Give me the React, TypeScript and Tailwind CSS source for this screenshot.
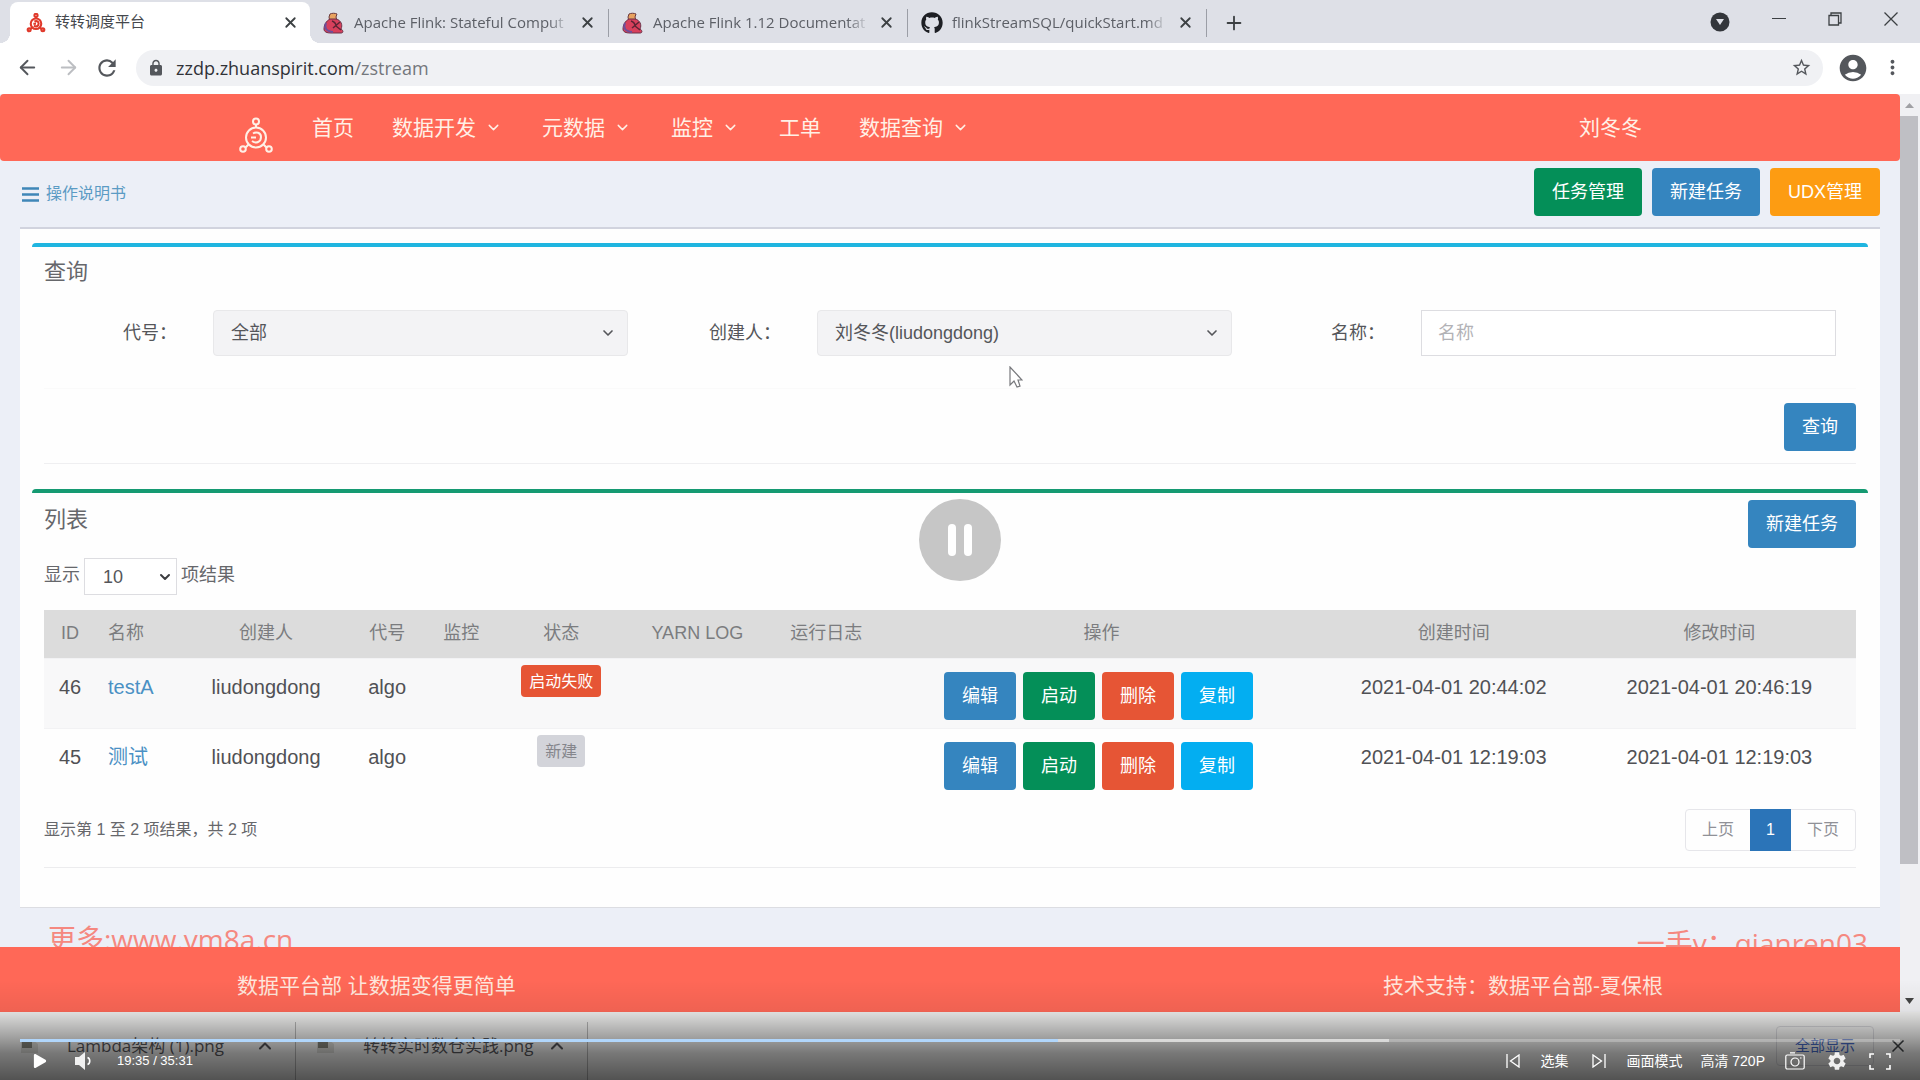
import React from 'react';
import { ArrowLeft, ArrowRight, ChevronDown, ChevronUp, Plus, X } from 'lucide-react';
import { FaGithub, FaPlay } from 'react-icons/fa';
import { MdAccountCircle, MdLock, MdMoreVert, MdRefresh, MdSettings, MdStarBorder } from 'react-icons/md';

interface Task {
  id: number;
  name: string;
  owner: string;
  code: string;
  status: string;
  failed: boolean;
  createdAt: string;
  updatedAt: string;
}

const tasks: Task[] = [
  {
    id: 46,
    name: 'testA',
    owner: 'liudongdong',
    code: 'algo',
    status: '启动失败',
    failed: true,
    createdAt: '2021-04-01 20:44:02',
    updatedAt: '2021-04-01 20:46:19',
  },
  {
    id: 45,
    name: '测试',
    owner: 'liudongdong',
    code: 'algo',
    status: '新建',
    failed: false,
    createdAt: '2021-04-01 12:19:03',
    updatedAt: '2021-04-01 12:19:03',
  },
];

const columns = [
  { title: 'ID', width: 'w-[52px]' },
  { title: '名称', width: 'w-[82px]' },
  { title: '创建人', width: 'w-[176px]' },
  { title: '代号', width: 'w-[66px]' },
  { title: '监控', width: 'w-[82px]' },
  { title: '状态', width: 'w-[118px]' },
  { title: 'YARN LOG', width: 'w-[154px]' },
  { title: '运行日志', width: 'w-[104px]' },
  { title: '操作', width: 'w-[446px]' },
  { title: '创建时间', width: 'w-[258px]' },
  { title: '修改时间', width: 'w-[273px]' },
];

const navItems = [
  { label: '首页', menu: false },
  { label: '数据开发', menu: true },
  { label: '元数据', menu: true },
  { label: '监控', menu: true },
  { label: '工单', menu: false },
  { label: '数据查询', menu: true },
];

const tones = {
  blue: 'bg-[#3585bf]',
  green: 'bg-[#048f58]',
  orange: 'bg-[#fd9c12]',
  red: 'bg-[#e65535]',
  cyan: 'bg-[#03aef1]',
};

function Button({ tone, children }: { tone: keyof typeof tones; children: React.ReactNode }) {
  return (
    <button type="button" className={`h-12 shrink-0 rounded px-[18px] text-lg text-white ${tones[tone]}`}>
      {children}
    </button>
  );
}

function BrandLogo({ className, strokeWidth }: { className: string; strokeWidth: number }) {
  return (
    <svg viewBox="0 0 34 38" fill="none" stroke="currentColor" strokeWidth={strokeWidth} className={className}>
      <circle cx="17" cy="4.500" r="3" />
      <path d="M17 7.500v3.500M10 27l-4 4M24 27l4 4" />
      <circle cx="17" cy="20.500" r="10" />
      <path d="M14 16.500c3-2 8-1 8 3.500 0 5-5 7-9 4M12 20.500h5" />
      <circle cx="4" cy="32" r="2.800" />
      <circle cx="30" cy="32" r="2.800" />
    </svg>
  );
}

function FlinkLogo() {
  return (
    <svg viewBox="0 0 22 22" className="size-[22px] shrink-0">
      <path d="M7 2c2-1 5-1 7 0l-1 3 1 4-7 1-1-5z" fill="#e8a25f" stroke="#6b3a3c" />
      <path d="M7 7C3 9 1 13 1 17c0 3 3 4 7 4h10c3 0 2-3 0-4 2-4 0-9-5-10z" fill="#d8405c" stroke="#6b3048" />
      <path d="M3 11c-2 5 0 8 7 9" stroke="#6d4f9a" strokeWidth="2" fill="none" />
      <path d="M9 9c3 1 4 3 4 5l5 4M17 10l-7 6" stroke="#5d2434" strokeWidth="1.500" fill="none" />
    </svg>
  );
}

function Tab({ icon, title }: { icon: React.ReactNode; title: string }) {
  return (
    <div className="flex h-[38px] w-[298px] items-center gap-[9px] pr-3 pl-[13px]">
      {icon}
      <span className="flex-1 overflow-hidden font-['Open_Sans',sans-serif] text-[15px] whitespace-nowrap text-[#5c5f66] [mask-image:linear-gradient(to_right,black_90%,transparent)]">
        {title}
      </span>
      <button type="button" aria-label="关闭标签页">
        <X className="size-[17px] text-[#3c4043]" strokeWidth={2.5} />
      </button>
    </div>
  );
}

function TabStrip() {
  return (
    <div className="flex h-[43px] items-center bg-[#dee0e7] pt-0.5">
      <div className="relative ml-2.5 flex h-full w-[300px] items-center rounded-t-lg bg-white pr-[11px] pl-4">
        <span className="absolute bottom-0 -left-2.5 size-2.5 bg-[radial-gradient(circle_at_top_left,transparent_70%,white_72%)]" />
        <span className="absolute -right-2.5 bottom-0 size-2.5 bg-[radial-gradient(circle_at_top_right,transparent_70%,white_72%)]" />
        <BrandLogo className="size-5 shrink-0 text-[#e0392b]" strokeWidth={4} />
        <span className="ml-[9px] flex-1 text-[15px] text-[#45484d]">转转调度平台</span>
        <button type="button" aria-label="关闭标签页">
          <X className="size-[17px] text-[#3c4043]" strokeWidth={2.5} />
        </button>
      </div>
      <Tab icon={<FlinkLogo />} title="Apache Flink: Stateful Comput" />
      <span className="h-7 w-px bg-[#9b9ea6]" />
      <Tab icon={<FlinkLogo />} title="Apache Flink 1.12 Documentat" />
      <span className="h-7 w-px bg-[#9b9ea6]" />
      <Tab icon={<FaGithub className="size-[22px] shrink-0 text-[#1d1f24]" />} title="flinkStreamSQL/quickStart.md" />
      <span className="h-7 w-px bg-[#9b9ea6]" />
      <button type="button" aria-label="新标签页" className="ml-4">
        <Plus className="size-[22px] text-[#3c4043]" />
      </button>
      <div className="ml-auto flex items-center gap-[42px] pr-[22px] pb-2 text-[#3c4043]">
        <svg viewBox="0 0 20 20" className="mt-1.5 size-5">
          <circle cx="10" cy="10" r="9.500" fill="#33363b" />
          <path d="M6 7h8l-4 6z" fill="#dee0e7" />
        </svg>
        <svg viewBox="0 0 14 14" className="size-3.5" stroke="currentColor" fill="none">
          <path d="M0 6.500h14" />
        </svg>
        <svg viewBox="0 0 14 14" className="size-3.5" stroke="currentColor" strokeWidth="1.300" fill="none">
          <path d="M1 3.500h9.500V13H1zM3 3V1h10v10h-2" />
        </svg>
        <svg viewBox="0 0 14 14" className="size-3.5" stroke="currentColor" strokeWidth="1.300" fill="none">
          <path d="M.5.5l13 13M13.500.5l-13 13" />
        </svg>
      </div>
    </div>
  );
}

function AddressBar() {
  return (
    <div className="flex h-[51px] items-center bg-white pr-4 pb-0.5 pl-4 text-[#54575c]">
      <button type="button" aria-label="后退">
        <ArrowLeft className="size-[23px]" />
      </button>
      <button type="button" aria-label="前进" className="ml-[18px]">
        <ArrowRight className="size-[23px] text-[#bcbec2]" />
      </button>
      <button type="button" aria-label="刷新" className="ml-3.5">
        <MdRefresh className="size-[26px]" />
      </button>
      <div className="mr-3.5 ml-4 flex h-9 flex-1 items-center rounded-full bg-[#f0f1f4] px-[11px]">
        <MdLock className="size-[18px]" />
        <span className="ml-[11px] flex-1 font-['Open_Sans',sans-serif] text-lg leading-none text-[#303338]">
          zzdp.zhuanspirit.com<span className="text-[#74777c]">/zstream</span>
        </span>
        <MdStarBorder className="size-[21px]" />
      </div>
      <MdAccountCircle className="size-8" />
      <MdMoreVert className="ml-3 size-[23px]" />
    </div>
  );
}

function NavBar() {
  return (
    <nav className="flex h-[67px] items-center rounded bg-[#ff6857] pl-[239px] text-[21px] text-[#fff0e6]">
      <BrandLogo className="mt-4 h-[38px] w-[34px]" strokeWidth={2} />
      <ul className="ml-5 flex flex-1">
        {navItems.map((item) => (
          <li key={item.label}>
            <a href="#" className="flex items-center px-[19px]">
              {item.label}
              {item.menu && <ChevronDown className="mr-0.5 ml-[9px] size-[17px]" />}
            </a>
          </li>
        ))}
      </ul>
      <a href="#" className="mr-[258px]">
        刘冬冬
      </a>
    </nav>
  );
}

function Field({ id, label, children }: { id: string; label: string; children: React.ReactNode }) {
  return (
    <div className="flex items-center gap-9 pr-5">
      <label htmlFor={id} className="w-[133px] shrink-0 text-right">
        {label}
      </label>
      <div className="relative flex-1">{children}</div>
    </div>
  );
}

function FilterSelect({ id, value }: { id: string; value: string }) {
  return (
    <>
      <select
        id={id}
        className="h-[46px] w-full appearance-none rounded-sm border border-[#e8e8ea] bg-[#f3f3f5] px-[17px] text-[#55565a]"
      >
        <option>{value}</option>
      </select>
      <ChevronDown className="pointer-events-none absolute top-[15px] right-3 size-4 text-[#55565a]" strokeWidth={2.5} />
    </>
  );
}

function QueryPanel() {
  return (
    <section className="rounded-t border-t-4 border-[#1fb5e0] px-3 text-lg text-[#55565a]">
      <h2 className="h-12 text-[22px] leading-[50px] text-[#66676b]">查询</h2>
      <form>
        <div className="grid grid-cols-3 pt-[15px] pb-8">
          <Field id="code" label="代号：">
            <FilterSelect id="code" value="全部" />
          </Field>
          <Field id="owner" label="创建人：">
            <FilterSelect id="owner" value="刘冬冬(liudongdong)" />
          </Field>
          <Field id="name" label="名称：">
            <input
              id="name"
              type="text"
              placeholder="名称"
              className="block h-[46px] w-full border border-[#dddde1] bg-white px-4 placeholder:text-[#b2b2b6]"
            />
          </Field>
        </div>
        <div className="flex justify-end border-t border-b border-t-[#fafafa] border-b-[#efeff1] pt-3.5 pb-3">
          <Button tone="blue">查询</Button>
        </div>
      </form>
    </section>
  );
}

function TaskTable() {
  return (
    <table className="mt-[15px] w-full table-fixed text-center">
      <thead>
        <tr className="h-12 bg-[#dcdcdc] text-lg text-[#7b7c7f]">
          {columns.map((col) => (
            <th
              key={col.title}
              className={`pb-0.5 font-normal ${col.width} ${col.title === '名称' ? 'pl-3 text-left' : ''}`}
            >
              {col.title}
            </th>
          ))}
        </tr>
      </thead>
      <tbody>
        {tasks.map((task) => (
          <tr
            key={task.id}
            className="h-[70px] border-t border-[#f2f2f4] align-top text-xl leading-[30px] text-[#505155] odd:bg-[#f8f8f9]"
          >
            <td className="pt-[13px]">{task.id}</td>
            <td className="pt-[13px] pl-3 text-left">
              <a href="#" className="text-[#4a90c4]">
                {task.name}
              </a>
            </td>
            <td className="pt-[13px]">{task.owner}</td>
            <td className="pt-[13px]">{task.code}</td>
            <td />
            <td className="pt-1.5">
              <span
                className={`mx-auto block h-8 w-fit rounded px-2 text-base leading-[34px] ${
                  task.failed ? 'bg-[#e65535] text-white' : 'bg-[#d3d4da] text-[#85868c]'
                }`}
              >
                {task.status}
              </span>
            </td>
            <td />
            <td />
            <td className="pt-[13px] pr-1.5">
              <div className="flex justify-center gap-[7px]">
                <Button tone="blue">编辑</Button>
                <Button tone="green">启动</Button>
                <Button tone="red">删除</Button>
                <Button tone="cyan">复制</Button>
              </div>
            </td>
            <td className="pt-[13px]">{task.createdAt}</td>
            <td className="pt-[13px]">{task.updatedAt}</td>
          </tr>
        ))}
      </tbody>
    </table>
  );
}

function ListPanel() {
  return (
    <section className="mt-[25px] rounded-t border-t-4 border-[#159a72] px-3 text-lg text-[#66676b]">
      <div className="flex justify-between pt-[7px]">
        <h2 className="text-[22px] leading-10">列表</h2>
        <Button tone="blue">新建任务</Button>
      </div>
      <div className="mt-2.5 flex h-[37px] items-center">
        <label htmlFor="page-size" className="pb-1">
          显示
        </label>
        <div className="relative mx-1">
          <select
            id="page-size"
            className="block h-[37px] w-[93px] appearance-none border border-[#dddde1] bg-white pl-[18px] text-[#55565a]"
          >
            <option>10</option>
          </select>
          <ChevronDown
            className="pointer-events-none absolute top-[11px] right-1 size-4 text-[#3c3d40]"
            strokeWidth={3}
          />
        </div>
        <span className="pb-1">项结果</span>
      </div>
      <TaskTable />
      <div className="mt-[11px] flex h-[42px] items-center justify-between text-base">
        <p>显示第 1 至 2 项结果，共 2 项</p>
        <div className="flex h-[42px] rounded border border-[#e6e6ea] text-[#909197]">
          <button type="button" className="px-4">
            上页
          </button>
          <button type="button" className="-my-px w-[41px] bg-[#2b74b8] text-white">
            1
          </button>
          <button type="button" className="px-4">
            下页
          </button>
        </div>
      </div>
      <hr className="mt-4 border-[#ececee]" />
    </section>
  );
}

function ScrollBar() {
  return (
    <div className="flex w-5 shrink-0 flex-col items-center bg-[#f0f0f3] pr-0.5">
      <svg viewBox="0 0 18 22" className="h-[22px] w-[18px]">
        <path d="M5 14h9l-4.500-5z" fill="#a0a0a4" />
      </svg>
      <div className="w-full flex-[748] bg-[#bfbfc4]" />
      <div className="flex-[126]" />
      <svg viewBox="0 0 18 22" className="h-[22px] w-[18px]">
        <path d="M5 8h9l-4.500 6z" fill="#444" />
      </svg>
    </div>
  );
}

function DownloadItem({ name }: { name: string }) {
  return (
    <div className="flex h-full items-center border-r border-[#b4b4b4] pr-5 pb-2.5 pl-[21px]">
      <svg viewBox="0 0 18 14" className="h-3.5 w-[18px]">
        <path d="M0 1h12l5 4v9H0z" fill="#d8d8d4" />
        <path d="M1 3h10v6H1z" fill="#85857c" />
      </svg>
      <span className="ml-7 flex-1 font-['Open_Sans','Noto_Sans_CJK_SC',sans-serif] text-[17px] leading-6 text-[#55555a]">
        {name}
      </span>
      <button type="button" aria-label="更多">
        <ChevronUp className="size-5 text-[#55555a]" strokeWidth={2.5} />
      </button>
    </div>
  );
}

function DownloadBar() {
  return (
    <div className="flex h-[68px] items-center bg-[#f1f1f0] pr-3">
      <div className="h-full w-[296px] pt-2.5">
        <DownloadItem name="Lambda架构 (1).png" />
      </div>
      <div className="h-full w-[292px] pt-2.5">
        <DownloadItem name="转转实时数仓实践.png" />
      </div>
      <button
        type="button"
        className="ml-auto h-10 rounded border border-[#d4d4d8] px-[18px] text-[15px] text-[#4467c0]"
      >
        全部显示
      </button>
      <button type="button" aria-label="关闭" className="ml-3.5">
        <X className="size-5 text-[#3c4043]" />
      </button>
    </div>
  );
}

function PlayerControls() {
  return (
    <div className="absolute inset-x-0 bottom-0 bg-[linear-gradient(to_bottom,transparent,rgba(0,0,0,0.06)_30%,rgba(0,0,0,0.34)_58%,rgba(0,0,0,0.5)_73%,rgba(0,0,0,0.66))] px-5 pt-[59px] text-sm text-white">
      <div className="flex h-[3px] bg-white/25">
        <div className="w-[55.2%] bg-[#b1d6fb]" />
        <div className="w-[17.6%] bg-white/50" />
      </div>
      <div className="flex h-[38px] items-center">
        <button type="button" aria-label="播放" className="ml-[13px]">
          <FaPlay className="size-3.5" />
        </button>
        <button type="button" aria-label="音量" className="ml-7">
          <svg viewBox="0 0 18 18" className="size-[18px]">
            <path d="M0 5h4l6-5v18l-6-5H0z" fill="currentColor" opacity=".9" />
            <path d="M12.500 5.500c3 1 3 6 0 7" stroke="currentColor" strokeWidth="1.600" fill="none" />
          </svg>
        </button>
        <span className="ml-6 flex-1 text-[13px]">19:35 / 35:31</span>
        <button type="button" aria-label="上一集">
          <svg viewBox="0 0 14 14" className="size-3.5" stroke="currentColor" strokeWidth="1.300" fill="none">
            <path d="M1 0v14M13 1v12L4.500 7z" />
          </svg>
        </button>
        <button type="button" className="ml-5">
          选集
        </button>
        <button type="button" aria-label="下一集" className="ml-6">
          <svg viewBox="0 0 14 14" className="size-3.5" stroke="currentColor" strokeWidth="1.300" fill="none">
            <path d="M13 0v14M1 1v12l8.500-6z" />
          </svg>
        </button>
        <button type="button" className="ml-5">
          画面模式
        </button>
        <button type="button" className="ml-[18px]">
          高清 720P
        </button>
        <button type="button" aria-label="截图" className="ml-5">
          <svg viewBox="0 0 20 18" className="h-[18px] w-5" stroke="currentColor" strokeWidth="1.200" fill="none">
            <rect x=".8" y="3" width="18.400" height="14" rx="1.500" />
            <path d="M5 .8h5M15 6h1.500" />
            <circle cx="10" cy="10" r="4" />
          </svg>
        </button>
        <button type="button" aria-label="设置" className="ml-[21px]">
          <MdSettings className="size-[22px] text-white/90" />
        </button>
        <button type="button" aria-label="全屏" className="mr-[9px] ml-[21px]">
          <svg viewBox="0 0 22 17" className="h-[17px] w-[22px]" stroke="currentColor" strokeWidth="1.600" fill="none">
            <path d="M1 5V1h4M17 1h4v4M21 12v4h-4M5 16H1v-4" />
          </svg>
        </button>
      </div>
    </div>
  );
}

export default function App() {
  return (
    <div className="relative flex min-h-screen flex-col overflow-hidden bg-[#eceff7] font-['Liberation_Sans','Noto_Sans_CJK_SC',sans-serif]">
      <TabStrip />
      <AddressBar />

      <div className="flex flex-1">
        <div className="flex min-w-0 flex-1 flex-col">
          <NavBar />
          <div className="flex h-[66px] items-center justify-between px-5">
            <a href="#" className="flex items-center gap-[7px] pl-0.5 text-base text-[#5b9bc4]">
              <svg viewBox="0 0 17 15" className="h-[15px] w-[17px]" stroke="#3f87b8" strokeWidth="2.500">
                <path d="M0 1.500h17M0 7.500h17M0 13.500h17" />
              </svg>
              操作说明书
            </a>
            <div className="flex gap-2.5 pb-1">
              <Button tone="green">任务管理</Button>
              <Button tone="blue">新建任务</Button>
              <Button tone="orange">UDX管理</Button>
            </div>
          </div>

          <main className="mx-5 flex-1 border-t-2 border-b border-t-[#d1d3de] border-b-[#dcdde2] bg-[#fefefe] px-3 pt-3.5">
            <QueryPanel />
            <ListPanel />
          </main>

          {/* Watermark, cut off by the footer */}
          <div className="flex h-[39px] items-start justify-between overflow-hidden pr-8 pl-12 font-['Open_Sans','Noto_Sans_CJK_SC',sans-serif] text-[28px] leading-[30px] text-[#f58880]">
            <span className="pt-4">更多:www.vm8a.cn</span>
            <span className="pt-5">一手v：qianren03</span>
          </div>

          <footer className="flex h-[65px] items-center justify-between bg-[#ff6857] px-[237px] pt-3 text-[21px] text-[#ffe6dc]">
            <span>数据平台部 让数据变得更简单</span>
            <span>技术支持：数据平台部-夏保根</span>
          </footer>
        </div>
        <ScrollBar />
      </div>

      <DownloadBar />
      <PlayerControls />

      {/* Mouse pointer in the recording */}
      <svg viewBox="0 0 14 22" className="absolute top-[366px] left-[1009px] h-[22px] w-3.5">
        <path d="M1 1v18l4-4 3 6 3-1-2-6h4z" fill="#fff" stroke="#77787c" strokeWidth="1.200" />
      </svg>

      {/* Pause */}
      <button
        type="button"
        aria-label="暂停"
        className="absolute top-1/2 left-1/2 flex size-[82px] -translate-1/2 items-center justify-center gap-2 rounded-full bg-black/22"
      >
        <span className="h-8 w-2 rounded-full bg-white" />
        <span className="h-8 w-2 rounded-full bg-white" />
      </button>
    </div>
  );
}
